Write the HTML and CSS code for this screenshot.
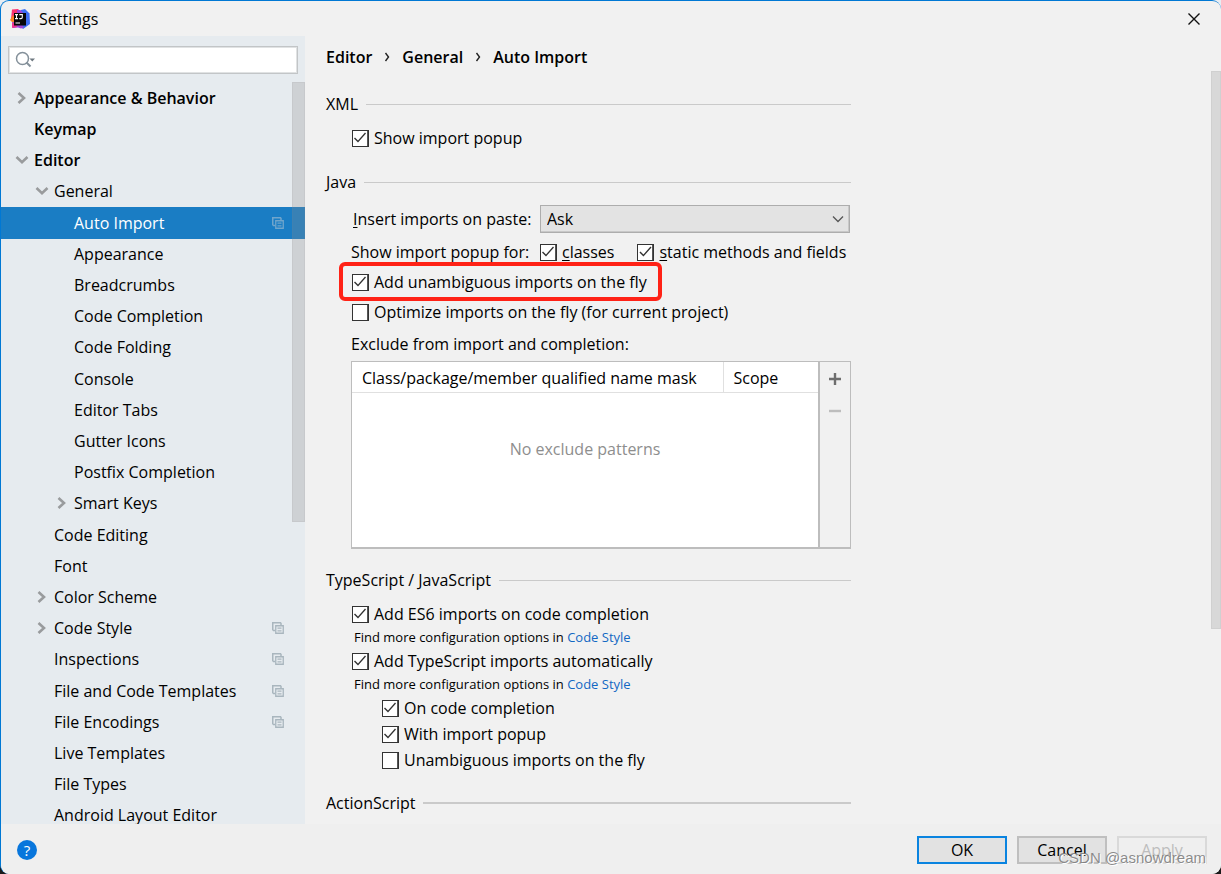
FILE: index.html
```html
<!DOCTYPE html>
<html lang="en">
<head>
<meta charset="utf-8">
<title>Settings</title>
<link rel="stylesheet" href="styles.css">
</head>
<body>
<svg class="defs" aria-hidden="true">
  <symbol id="right" viewBox="0 0 12 14"><path d="M2.500 2 8 7l-5.500 5" fill="none" stroke="#999b9d" stroke-width="2.600"/></symbol>
  <symbol id="down" viewBox="0 0 14 12"><path d="M1.500 3 7 8.300 12.500 3" fill="none" stroke="#999b9d" stroke-width="2.600"/></symbol>
  <symbol id="copy" viewBox="0 0 12 12"><path d="M.75 8.500V.75h8.500M1 8.500h2M9 1v2" fill="none" stroke="currentColor" stroke-width="1.500"/><path d="M3.750 3.750h7.500v7.500h-7.500zM5.500 6.200h4M5.500 8.800h4" fill="none" stroke="currentColor" stroke-width="1.300"/></symbol>
</svg>
<div class="window">
  <header class="titlebar">
    <svg class="logo" viewBox="0 0 20 20" aria-hidden="true">
      <path d="M2 .5 8 0l4 4-2 8-6 4-3-6z" fill="#fc3270"/>
      <path d="M0 11l3-5 3 5-3 3z" fill="#fd8224"/>
      <path d="M11 1l4-1 4.500 4.500L20 15l-7 5-3-3z" fill="#3d6ff2"/>
      <path d="M7 1l3.500 0L14 5H7zM2 13l9 2 3 3.500-3 1-3-1-5 .5z" fill="#a045d8"/>
      <path d="M2 14h4l1 4-5 1z" fill="#f0358f"/>
      <path d="M4 4h12v12.500H4z" fill="#080808"/>
      <path d="M5 5.600h3M6.500 5.600v4M5 9.600h3M9.300 5.600h3v2.700q0 1.300-1.300 1.300H9.300M5.500 14h4.500" fill="none" stroke="#fff" stroke-width="1.100"/>
    </svg>
    <h1 class="title">Settings</h1>
    <button class="close" type="button" aria-label="Close"><svg viewBox="0 0 14 14"><path d="M1.500 1.500l11 11M12.500 1.500l-11 11" stroke="#111" stroke-width="1.400"/></svg></button>
  </header>

  <div class="body">
    <aside class="sidebar">
      <div class="search">
        <svg viewBox="0 0 22 18" aria-hidden="true"><circle cx="7.500" cy="7.500" r="6" fill="none" stroke="#84909a" stroke-width="1.500"/><path d="M11.500 11.500l4 4" stroke="#84909a" stroke-width="2"/><path d="M14.500 7.500h5.500l-2.700 3z" fill="#6e7880"/></svg>
        <input type="text" aria-label="Search settings">
      </div>
      <nav class="tree" aria-label="Settings categories">
        <a href="#" class="item top"><svg class="arrow"><use href="#right"/></svg>Appearance &amp; Behavior</a>
        <a href="#" class="item top">Keymap</a>
        <a href="#" class="item top"><svg class="arrow wide"><use href="#down"/></svg>Editor</a>
        <a href="#" class="item second"><svg class="arrow wide"><use href="#down"/></svg>General</a>
        <a href="#" class="item third selected" aria-current="page">Auto Import<svg class="copy"><use href="#copy"/></svg></a>
        <a href="#" class="item third">Appearance</a>
        <a href="#" class="item third">Breadcrumbs</a>
        <a href="#" class="item third">Code Completion</a>
        <a href="#" class="item third">Code Folding</a>
        <a href="#" class="item third">Console</a>
        <a href="#" class="item third">Editor Tabs</a>
        <a href="#" class="item third">Gutter Icons</a>
        <a href="#" class="item third">Postfix Completion</a>
        <a href="#" class="item third"><svg class="arrow"><use href="#right"/></svg>Smart Keys</a>
        <a href="#" class="item second">Code Editing</a>
        <a href="#" class="item second">Font</a>
        <a href="#" class="item second"><svg class="arrow"><use href="#right"/></svg>Color Scheme</a>
        <a href="#" class="item second"><svg class="arrow"><use href="#right"/></svg>Code Style<svg class="copy"><use href="#copy"/></svg></a>
        <a href="#" class="item second">Inspections<svg class="copy"><use href="#copy"/></svg></a>
        <a href="#" class="item second">File and Code Templates<svg class="copy"><use href="#copy"/></svg></a>
        <a href="#" class="item second">File Encodings<svg class="copy"><use href="#copy"/></svg></a>
        <a href="#" class="item second">Live Templates</a>
        <a href="#" class="item second">File Types</a>
        <a href="#" class="item second">Android Layout Editor</a>
        <div class="tree-thumb"></div>
      </nav>
    </aside>

    <main class="content">
      <div class="page">
        <nav class="crumbs" aria-label="Breadcrumb">
          <span>Editor</span><svg viewBox="0 0 6 10"><path d="M1.500 1l3 4-3 4" fill="none" stroke="#222" stroke-width="1.400"/></svg>
          <span>General</span><svg viewBox="0 0 6 10"><path d="M1.500 1l3 4-3 4" fill="none" stroke="#222" stroke-width="1.400"/></svg>
          <span>Auto Import</span>
        </nav>

        <section class="group">
          <h2>XML</h2>
          <label class="check"><input type="checkbox" checked>Show import popup</label>
        </section>

        <section class="group">
          <h2>Java</h2>
          <div class="field">
            <label for="paste"><u>I</u>nsert imports on paste:</label>
            <div class="select"><select id="paste"><option>Ask</option><option>All</option><option>None</option></select><svg viewBox="0 0 12 8" aria-hidden="true"><path d="M1 1.500l5 5 5-5" fill="none" stroke="#555" stroke-width="1.300"/></svg></div>
          </div>
          <div class="popup-row">
            <span class="popup-label">Show import popup for:</span>
            <label class="check"><input type="checkbox" checked><span><u>c</u>lasses</span></label>
            <label class="check"><input type="checkbox" checked><span><u>s</u>tatic methods and fields</span></label>
          </div>
          <label class="check marked"><input type="checkbox" checked>Add unambiguous imports on the fly</label>
          <label class="check"><input type="checkbox">Optimize imports on the fly (for current project)</label>
          <p class="caption">Exclude from import and completion:</p>
          <div class="excludes">
            <div class="table-area">
              <table>
                <thead><tr><th class="mask">Class/package/member qualified name mask</th><th>Scope</th></tr></thead>
                <tbody><tr><td colspan="2">No exclude patterns</td></tr></tbody>
              </table>
            </div>
            <div class="tools">
              <button type="button" aria-label="Add"><svg viewBox="0 0 14 14"><path d="M7 1v12M1 7h12" stroke="#6e6e6e" stroke-width="2.400"/></svg></button>
              <button type="button" aria-label="Remove" disabled><svg viewBox="0 0 14 14"><path d="M1 7h12" stroke="#bdbdbd" stroke-width="2.400"/></svg></button>
            </div>
          </div>
        </section>

        <section class="group scripts">
          <h2>TypeScript / JavaScript</h2>
          <label class="check"><input type="checkbox" checked>Add ES6 imports on code completion</label>
          <p class="hint">Find more configuration options in <a href="#">Code Style</a></p>
          <label class="check"><input type="checkbox" checked>Add TypeScript imports automatically</label>
          <p class="hint">Find more configuration options in <a href="#">Code Style</a></p>
          <div class="nested">
            <label class="check"><input type="checkbox" checked>On code completion</label>
            <label class="check"><input type="checkbox" checked>With import popup</label>
            <label class="check"><input type="checkbox">Unambiguous imports on the fly</label>
          </div>
        </section>

        <section class="group action">
          <h2>ActionScript</h2>
        </section>
      </div>
      <div class="page-thumb"></div>
    </main>
  </div>

  <footer class="footer">
    <button class="help" type="button" aria-label="Help">?</button>
    <button class="btn default" type="button">OK</button>
    <button class="btn" type="button">Cancel</button>
    <button class="btn" type="button" disabled>Apply</button>
    <span class="watermark">CSDN @asnowdream</span>
  </footer>
</div>
</body>
</html>
```
FILE: styles.css
```css
* { box-sizing: border-box; }

body {
  margin: 0;
  background: linear-gradient(#e8edf2 50%, #1a1a1a 50%);
  color: #000;
  font: 16px/24px "Open Sans", "Noto Sans", sans-serif;
}

h1, h2, p { margin: 0; font: inherit; }
button, input, select { font: inherit; color: inherit; }
.defs { display: none; }

.window {
  display: flex;
  flex-direction: column;
  height: 100vh;
  overflow: hidden;
  background: #f1f1f1;
  border-top: 1px solid #0078d4;
  border-left: 1px solid #0078d4;
  border-radius: 9px;
}

.titlebar {
  display: flex;
  align-items: center;
  flex: none;
  height: 35px;
  padding: 1px 20px 0 9px;
}
.logo { width: 20px; height: 20px; margin-right: 9px; }
.title { font-size: 16px; }
.close { display: flex; margin-left: auto; padding: 0; border: 0; background: none; }
.close svg { width: 14px; height: 14px; }

.body { display: flex; flex: 1; min-height: 0; }

.sidebar {
  display: flex;
  flex-direction: column;
  flex: none;
  width: 304px;
  background: #e6ebef;
}
.search {
  display: flex;
  align-items: center;
  flex: none;
  height: 28px;
  margin: 10px 7px 8px;
  padding: 0 6px;
  background: #fff;
  border: 1px solid #c2c5c7;
  box-shadow: inset 0 0 0 1px #e0e2e3;
}
.search svg { width: 22px; height: 18px; }
.search input { flex: 1; min-width: 0; border: 0; outline: 0; background: none; }

.tree { position: relative; flex: 1; min-height: 0; overflow: hidden; }
.item {
  position: relative;
  display: flex;
  align-items: center;
  height: 31px;
  padding-right: 21px;
  color: inherit;
  text-decoration: none;
}
.item:nth-child(5n + 4) { height: 32px; }
.top { padding-left: 33px; font-weight: 600; }
.second { padding-left: 53px; }
.third { padding-left: 73px; }
.selected { background: #1a7dc4; box-shadow: 0 1px #1a7dc4; color: #fff; }
.arrow { width: 12px; height: 14px; margin: 0 6px 0 -18px; }
.arrow.wide { width: 14px; height: 12px; margin: 0 5px 0 -19px; }
.copy { width: 12px; height: 12px; margin-left: auto; color: #a9b6be; }
.selected .copy { color: #6fa5cc; }
.tree-thumb {
  position: absolute;
  top: 0;
  right: 0;
  width: 13px;
  height: 440px;
  background: rgba(140, 140, 140, .27);
  border: 1px solid rgba(140, 140, 140, .1);
}

.content { position: relative; flex: 1; min-width: 0; overflow: hidden; }
.page { max-width: 546px; padding: 9px 0 0 21px; }
.page-thumb {
  position: absolute;
  top: 35px;
  right: 0;
  width: 10px;
  height: 558px;
  background: #d8d8d8;
  border: 1px solid #d0d0d0;
}

.crumbs { display: flex; align-items: center; font-weight: 600; }
.crumbs svg { width: 6px; height: 10px; margin: 0 12px; }

.group { display: flex; flex-direction: column; padding: 23px 0 0 25px; }
.group h2 { display: flex; align-items: center; gap: 8px; margin: 0 0 7px -25px; }
.group h2::after { content: ""; flex: 1; height: 1px; background: #cacaca; }
.group + .group { padding-top: 17px; }

.check { display: flex; align-items: center; align-self: flex-start; gap: 5px; min-height: 30px; white-space: nowrap; }
.check input {
  appearance: none;
  flex: none;
  width: 17px;
  height: 17px;
  margin: 0 0 0 1px;
  background: #fff;
  border: 1px solid #333;
  box-shadow: inset -1px 0 #555;
}
.check input:checked::before {
  content: "";
  display: block;
  width: 15px;
  height: 15px;
  background: #333;
  clip-path: polygon(1px 8px, 2px 7px, 5px 10px, 12px 2px, 13px 3px, 5px 12px);
}

.field { display: flex; align-items: center; min-height: 36px; padding-left: 2px; }
.field > label { flex: none; width: 187px; margin: 0; }
.select { position: relative; flex: 1; margin-right: 1px; }
.select select {
  display: block;
  appearance: none;
  width: 100%;
  height: 28px;
  padding: 0 6px;
  background: #e3e3e3;
  border: 1px solid #adadad;
  border-radius: 0;
  box-shadow: inset -1px -1px #c8c8c8;
}
.select svg { position: absolute; top: 10px; right: 6px; width: 12px; height: 8px; pointer-events: none; }

.popup-row { display: flex; align-items: center; }
.popup-label { width: 188px; }
.popup-row .check + .check { margin-left: 22px; }
u { text-underline-offset: 2px; text-decoration-thickness: 1px; }

.marked { position: relative; }
.marked::after {
  content: "";
  position: absolute;
  inset: -5px -15px -4px -12px;
  border: 4px solid #ff2216;
  border-radius: 6px;
  pointer-events: none;
}

.caption { margin: 5px 0; }
.excludes { display: flex; height: 188px; border: 1px solid #bdbdbd; border-bottom-width: 2px; }
.table-area { flex: 1; background: #fff; border-right: 2px solid #bdbdbd; }
table { width: 100%; border-collapse: collapse; table-layout: fixed; }
th { height: 30px; padding: 2px 10px 0; font-weight: 400; text-align: left; white-space: nowrap; border-bottom: 1px solid #e0e0e0; }
.mask { width: 371px; border-right: 1px solid #e0e0e0; }
td { height: 114px; padding: 0; color: #8e8e8e; text-align: center; }
.tools { display: flex; flex-direction: column; width: 30px; padding-top: 1px; }
.tools button { display: grid; place-items: center; height: 32px; padding: 0; border: 0; background: none; }
.tools svg { width: 14px; height: 14px; }

.group.scripts { padding-top: 19px; }
.hint { padding-left: 3px; font-size: 13px; line-height: 17px; }
.hint a { color: #1268c3; text-decoration: none; }
.nested { padding: 2px 0 0 30px; }
.nested .check { min-height: 26px; }
.group.action { padding-top: 18px; }
.group.action h2::after { height: 2px; }

.footer {
  position: relative;
  display: flex;
  align-items: center;
  flex: none;
  gap: 10px;
  height: 50px;
  padding: 2px 14px 0 16px;
  background: #efefef;
}
.help {
  width: 20px;
  height: 20px;
  margin-right: auto;
  padding: 0;
  border: 0;
  border-radius: 50%;
  background: #0876dc;
  color: #fff;
  line-height: 20px;
  font-size: 15px;
}
.btn { width: 90px; height: 28px; padding: 0; line-height: 22px; background: #e2e2e2; border: 2px solid #bfbfbf; }
.btn.default { border-color: #0a84e0; }
.btn:disabled { background: #efefef; border-color: #d9d9d9; color: #bdbdbd; }
.watermark {
  position: absolute;
  right: 15px;
  bottom: 6px;
  color: rgba(120, 120, 120, .85);
  font: 15px/20px "Liberation Sans", sans-serif;
  text-shadow: 1px 1px #fff;
  pointer-events: none;
}
```
